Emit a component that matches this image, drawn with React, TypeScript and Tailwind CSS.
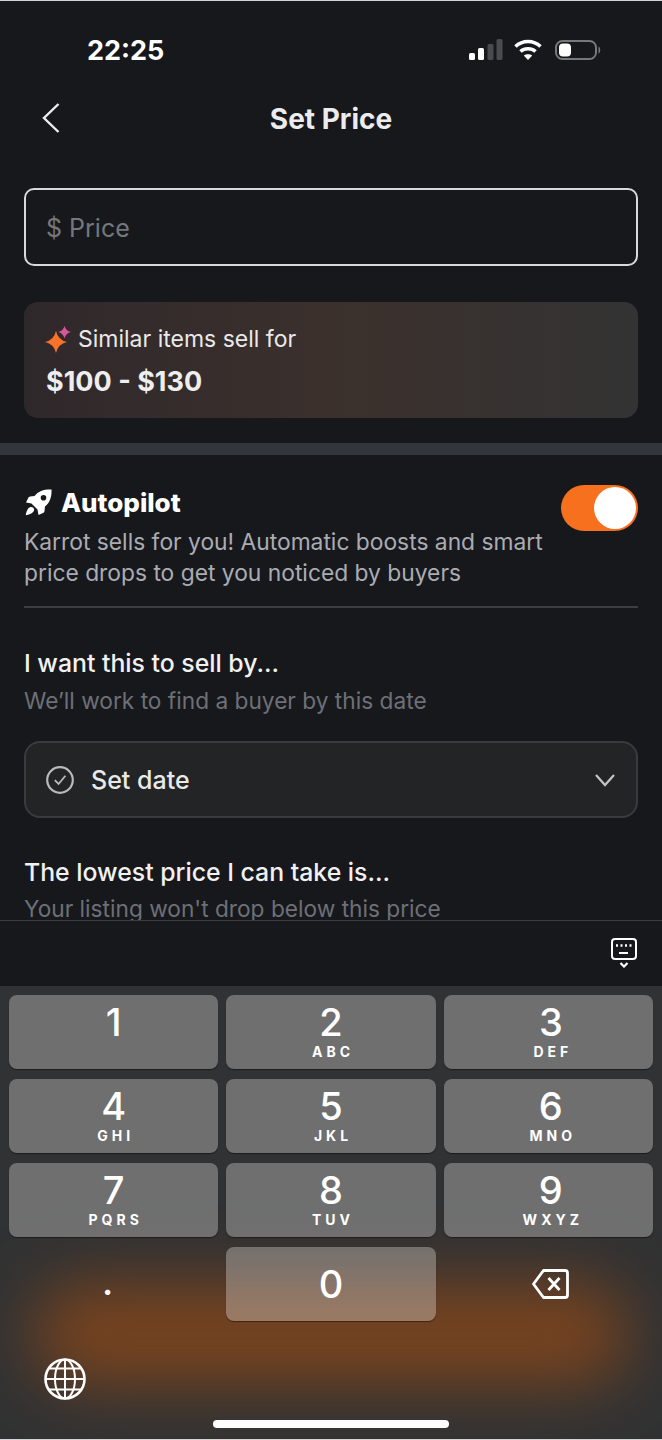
const KEYS = [
  { n: "1", l: "", shift: false },
  { n: "2", l: "ABC", shift: false },
  { n: "3", l: "DEF", shift: true },
  { n: "4", l: "GHI", shift: false },
  { n: "5", l: "JKL", shift: false },
  { n: "6", l: "MNO", shift: true },
  { n: "7", l: "PQRS", shift: false },
  { n: "8", l: "TUV", shift: false },
  { n: "9", l: "WXYZ", shift: true },
];

function Key({ n, l, shift }: { n: string; l: string; shift: boolean }) {
  return (
    <div className={`h-[74px] rounded-[8px] bg-white/30 shadow-[0_1px_1px_rgba(0,0,0,0.45)] flex flex-col items-center pt-[6px] text-white ${shift ? "pl-[5px]" : ""}`}>
      <span className="text-[38px] leading-[42px] font-medium">{n}</span>
      <span className="mt-[1px] text-[14px] leading-[16px] font-bold tracking-[4px] pl-[4px]">{l}</span>
    </div>
  );
}

function StatusIcons() {
  return (
    <div className="flex items-center -mt-[2px]">
      <svg width="34" height="21" viewBox="0 0 34 21">
        <rect x="0" y="14" width="6" height="7" rx="1.5" fill="#fff" />
        <rect x="9" y="9" width="6" height="12" rx="1.5" fill="#fff" />
        <rect x="18.500" y="5" width="6" height="16" rx="1.500" fill="#4a4b4e" />
        <rect x="27.500" y="0" width="6" height="21" rx="1.500" fill="#4a4b4e" />
      </svg>
      <svg width="28" height="21" viewBox="0 0 28 21" fill="none" stroke="#fff" strokeWidth="3.600" className="ml-[11px]">
        <path d="M1.500 7.500 C8.500 0.800 19.500 0.800 26.500 7.500" />
        <path d="M6.500 12.500 C10.500 8.800 17.500 8.800 21.500 12.500" />
        <path d="M14 21 L9.800 16.500 C12 14.700 16 14.700 18.200 16.500 Z" fill="#fff" stroke="none" />
      </svg>
      <svg width="46" height="20" viewBox="0 0 46 20" fill="none" className="ml-[13px]">
        <rect x="1" y="1" width="40" height="18" rx="6.500" stroke="#77787b" strokeWidth="2" />
        <rect x="4" y="3.500" width="12" height="13" rx="4" fill="#fff" />
        <path d="M43.500 6.500 C45.800 7.500 45.800 12.500 43.500 13.500 Z" fill="#77787b" />
      </svg>
    </div>
  );
}

function Sparkles() {
  return (
    <svg width="27" height="27" viewBox="0 0 27 27" className="shrink-0">
      <path d="M11 5 Q13 14 22 16 Q13 18 11 27 Q9 18 0 16 Q9 14 11 5 Z" fill="#f9722a" />
      <path d="M19.500 0 Q20.800 4.800 26 6 Q20.800 7.200 19.500 12.500 Q18.200 7.200 13 6 Q18.200 4.800 19.500 0 Z" fill="#d8579b" />
    </svg>
  );
}

function Rocket() {
  return (
    <svg width="27" height="27" viewBox="0 0 27 27" className="shrink-0">
      <path
        fillRule="evenodd"
        fill="#fff"
        d="M26.500 0.500 C26.800 8 25 13.500 20 17.500 L19.500 22 C19.400 23 18.800 23.600 18 24 L13.500 26 L12.500 20.500 L6.500 14.500 L1 13.500 L3.200 9 C3.600 8.200 4.200 7.600 5.200 7.500 L9.500 7 C13.500 2 19 0.200 26.500 0.500 Z M18.500 6 A2.800 2.800 0 1 0 18.500 11.600 A2.800 2.800 0 1 0 18.500 6 Z"
      />
      <path d="M5.500 18 C7.800 17.600 9.600 19.400 9 21.600 C8.300 24.400 3.500 26 0.800 26.200 C1 23.400 2.600 18.600 5.500 18 Z" fill="#fff" />
    </svg>
  );
}

function CheckCircle() {
  return (
    <svg width="28" height="28" viewBox="0 0 28 28" fill="none" stroke="#b9babc" className="shrink-0">
      <circle cx="14" cy="14" r="12.800" strokeWidth="2.200" />
      <path d="M8.800 14.200 L12.600 18 L19.400 9.800" strokeWidth="1.800" />
    </svg>
  );
}

function KeyboardHide() {
  return (
    <svg width="26" height="30" viewBox="0 0 26 30" fill="none" stroke="#fff">
      <rect x="1" y="1" width="24" height="20" rx="3" strokeWidth="2" />
      <path d="M5 7.500 H7 M9.500 7.500 H11.500 M14 7.500 H16 M18.500 7.500 H20.500" strokeWidth="2.600" />
      <path d="M8 15 H17" strokeWidth="2" />
      <path d="M9.500 25 L13 28.500 L16.500 25" strokeWidth="2.200" />
    </svg>
  );
}

function Backspace() {
  return (
    <svg width="37" height="30" viewBox="0 0 37 30" fill="none" stroke="#fff" strokeWidth="2.800" strokeLinejoin="round">
      <path d="M11.500 1.500 H33 C34.500 1.500 35.500 2.500 35.500 4 V26 C35.500 27.500 34.500 28.500 33 28.500 H11.500 L1.500 15 Z" />
      <path d="M16.500 9 L27.500 21 M27.500 9 L16.500 21" />
    </svg>
  );
}

function GlobeIcon() {
  return (
    <svg width="42" height="42" viewBox="0 0 42 42" fill="none" stroke="#fff" strokeWidth="2">
      <circle cx="21" cy="21" r="19.500" strokeWidth="2.600" />
      <ellipse cx="21" cy="21" rx="10" ry="19.500" />
      <path d="M21 1.500 V40.500 M1.500 21 H40.500 M5 10.500 H37 M5 31.500 H37" />
    </svg>
  );
}

export default function App() {
  return (
    <div className="w-[662px] h-[1440px] flex flex-col overflow-hidden bg-[#17181c] border-t border-b border-[#d4d4d4] font-['Inter',sans-serif]">
      <div className="h-[99px] shrink-0 flex items-center justify-between pl-[87px] pr-[61px]">
        <span className="text-[27px] font-bold text-white pt-[2px]">22:25</span>
        <StatusIcons />
      </div>

      <div className="h-[36px] shrink-0 relative flex items-center justify-center">
        <svg width="18" height="30" viewBox="0 0 18 30" fill="none" stroke="#eeeeee" strokeWidth="2.400" className="absolute left-[42px] top-[3px]">
          <path d="M16.500 1 L2 15 L16.500 29" />
        </svg>
        <span className="text-[28px] font-bold text-[#ececee] pt-[2px]">Set Price</span>
      </div>

      <div className="flex-1 min-h-0 overflow-hidden flex flex-col">
        <div className="px-[24px] pt-[52px] pb-[25px] flex flex-col gap-[36px]">
          <div className="h-[78px] rounded-[10px] border-2 border-[#d9d9d9] flex items-center pl-[20px] pt-[3px]">
            <span className="text-[25px] text-[#74777c]">$ Price</span>
          </div>
          <div className="h-[116px] rounded-[14px] bg-gradient-to-r from-[#2f282b] via-[#3b302c] to-[#333333] px-[22px] pt-[21px]">
            <div className="flex items-center gap-[6px] -ml-[1px] h-[32px]">
              <Sparkles />
              <span className="text-[23px] text-[#e9e9ea]">Similar items sell for</span>
            </div>
            <div className="mt-[7px] text-[27px] font-bold text-[#eeeeef]">$100 - $130</div>
          </div>
        </div>

        <div className="h-[12px] shrink-0 bg-[#33363c]" />

        <div className="px-[24px] pt-[28px]">
          <div className="flex items-start justify-between">
            <div>
              <div className="flex items-center gap-[9px] h-[38px] pl-[1px]">
                <Rocket />
                <span className="text-[26px] font-extrabold text-white">Autopilot</span>
              </div>
              <p className="mt-[5px] text-[22.8px] leading-[31px] text-[#aaacb3] w-[530px]">
                Karrot sells for you! Automatic boosts and smart price drops to get you noticed by buyers
              </p>
            </div>
            <div className="w-[77px] h-[46px] shrink-0 rounded-full bg-[#f7701e] flex justify-end items-center pr-[2px] mt-[2px]">
              <div className="w-[42px] h-[42px] rounded-full bg-white" />
            </div>
          </div>

          <div className="h-[2px] bg-[#3c3e43] mt-[18px]" />

          <div className="mt-[39px] text-[24.8px] leading-[32px] font-medium text-[#f1f1f2]">I want this to sell by...</div>
          <div className="mt-[7px] text-[22.7px] leading-[30px] text-[#6d7076]">We’ll work to find a buyer by this date</div>

          <div className="mt-[25px] h-[77px] rounded-[16px] border-2 border-[#393b3f] bg-[#232426] flex items-center justify-between pl-[20px] pr-[21px]">
            <div className="flex items-center gap-[17px]">
              <CheckCircle />
              <span className="text-[25px] font-medium text-[#e9e9ea] pt-[3px]">Set date</span>
            </div>
            <svg width="20" height="14" viewBox="0 0 20 14" fill="none" stroke="#c4c5c7" strokeWidth="2.200">
              <path d="M1 2 L10 12 L19 2" />
            </svg>
          </div>

          <div className="mt-[38px] text-[24.8px] leading-[32px] font-medium text-[#f1f1f2]">The lowest price I can take is...</div>
          <div className="mt-[6px] text-[22.7px] leading-[30px] text-[#6d7076]">Your listing won't drop below this price</div>
        </div>
      </div>

      <div className="h-[66px] shrink-0 border-t border-[#3c3e43] bg-[#17181c] flex justify-end pr-[25px] pt-[17px]">
        <KeyboardHide />
      </div>

      <div className="relative h-[453px] shrink-0 overflow-hidden bg-[#313233]">
        {/* orange glow sits behind the translucent keys */}
        <div className="absolute left-[32px] right-[32px] top-[296px] h-[104px] rounded-full bg-[#77431f] blur-[32px]" />
        <div className="relative h-full px-[9px] pt-[9px] flex flex-col">
          <div className="grid grid-cols-3 gap-x-[8px] gap-y-[10px]">
            {KEYS.map((k) => (
              <Key key={k.n} n={k.n} l={k.l} shift={k.shift} />
            ))}
            <div className="h-[74px] flex items-center justify-center text-white text-[32px] font-bold leading-none pr-[12px]">.</div>
            <div className="h-[74px] rounded-[8px] bg-white/30 shadow-[0_1px_1px_rgba(0,0,0,0.45)] flex items-center justify-center text-white text-[38px] font-medium">0</div>
            <div className="h-[74px] flex items-center justify-center pl-[5px]">
              <Backspace />
            </div>
          </div>
          <div className="mt-[37px] pl-[35px]">
            <GlobeIcon />
          </div>
          <div className="mt-[20px] self-center w-[236px] h-[8px] rounded-full bg-white" />
        </div>
      </div>
    </div>
  );
}
